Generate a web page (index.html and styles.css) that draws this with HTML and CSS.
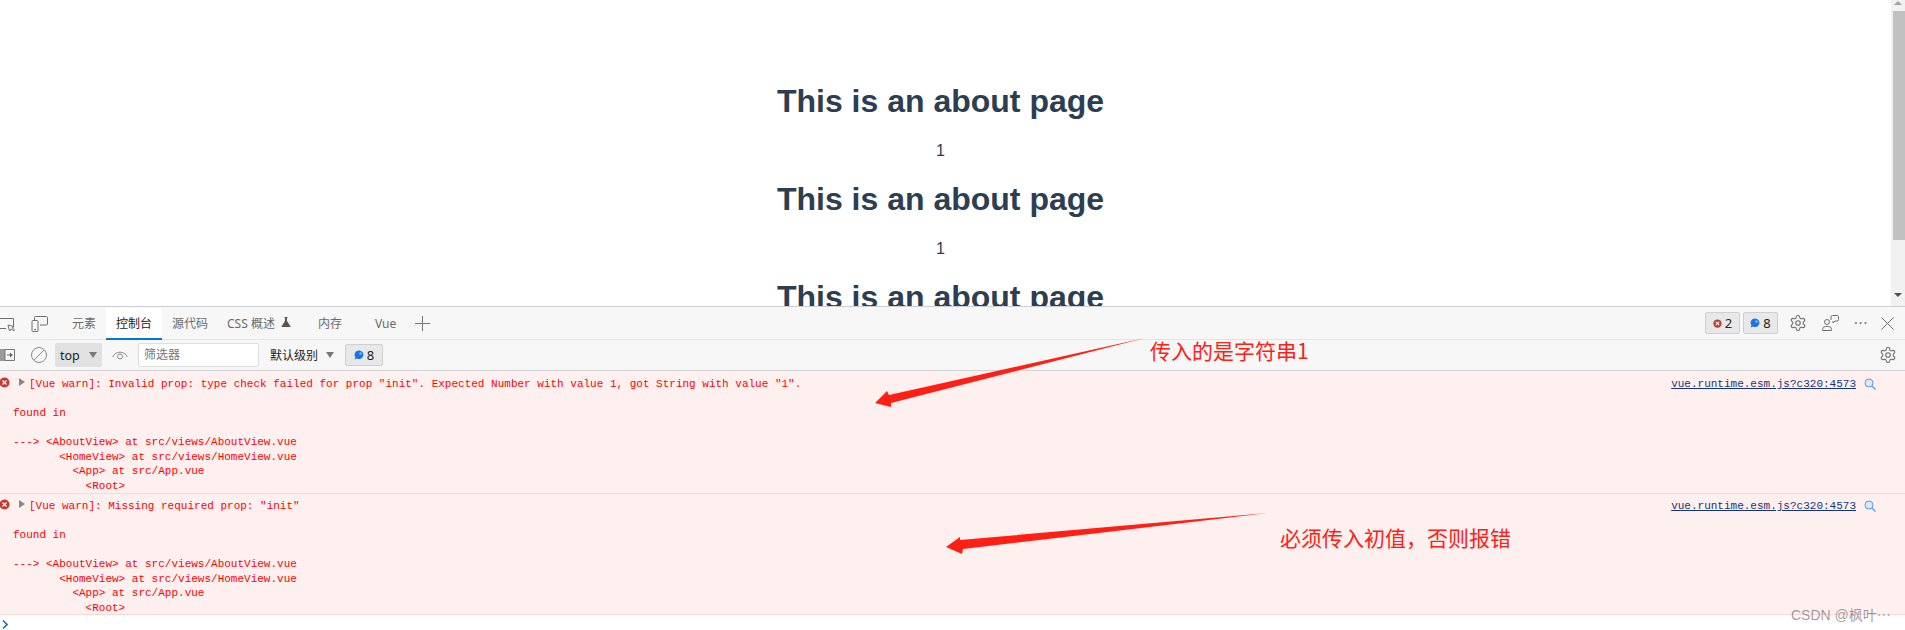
FILE: index.html
```html
<!DOCTYPE html>
<html lang="zh">
<head>
<meta charset="utf-8">
<title>About</title>
<link rel="stylesheet" href="styles.css">
</head>
<body>
<svg width="0" height="0" class="defs">
  <symbol id="gear" viewBox="0 0 24 24">
    <path fill="none" stroke="#6e6e6e" stroke-width="1.5" d="M12.22 2h-.44a2 2 0 0 0-2 2v.18a2 2 0 0 1-1 1.73l-.43.25a2 2 0 0 1-2 0l-.15-.08a2 2 0 0 0-2.73.73l-.22.38a2 2 0 0 0 .73 2.73l.15.1a2 2 0 0 1 1 1.72v.51a2 2 0 0 1-1 1.74l-.15.09a2 2 0 0 0-.73 2.73l.22.38a2 2 0 0 0 2.73.73l.15-.08a2 2 0 0 1 2 0l.43.25a2 2 0 0 1 1 1.73V20a2 2 0 0 0 2 2h.44a2 2 0 0 0 2-2v-.18a2 2 0 0 1 1-1.73l.43-.25a2 2 0 0 1 2 0l.15.08a2 2 0 0 0 2.73-.73l.22-.39a2 2 0 0 0-.73-2.73l-.15-.08a2 2 0 0 1-1-1.74v-.5a2 2 0 0 1 1-1.74l.15-.09a2 2 0 0 0 .73-2.73l-.22-.38a2 2 0 0 0-2.73-.73l-.15.08a2 2 0 0 1-2 0l-.43-.25a2 2 0 0 1-1-1.73V4a2 2 0 0 0-2-2z"/>
    <circle cx="12" cy="12" r="3" fill="none" stroke="#6e6e6e" stroke-width="1.5"/>
  </symbol>
  <symbol id="bubble" viewBox="0 0 12 12">
    <path fill="#1a73e8" d="M6 .5a5.2 5.2 0 1 1-2.4 9.8L.8 11.4l.9-2.7A5.2 5.2 0 0 1 6 .5z"/>
    <circle cx="7.8" cy="4.2" r="1.5" fill="#8ab8f5"/>
  </symbol>
  <symbol id="err" viewBox="0 0 12 12">
    <circle cx="6" cy="6" r="5.5" fill="#c5392c"/>
    <path stroke="#fff" stroke-width="1.4" d="M3.8 3.8l4.4 4.4M8.2 3.8l-4.4 4.4"/>
  </symbol>
</svg>

<div class="page">
  <main class="viewport">
    <section class="about"><h1 class="title">This is an about page</h1><div class="count">1</div></section>
    <section class="about"><h1 class="title">This is an about page</h1><div class="count">1</div></section>
    <section class="about"><h1 class="title">This is an about page</h1></section>
  </main>
  <div class="scrollbar">
    <span class="sb-up"></span>
    <span class="sb-thumb"></span>
    <span class="sb-down"></span>
  </div>
</div>

<div class="devtools">
  <div class="tabbar">
    <svg class="ic-inspect" width="16" height="16" viewBox="0 0 16 16"><path fill="none" stroke="#6e6e6e" d="M-2 2.5h15.5v8.5M6 12.5h-8"/><path fill="none" stroke="#6e6e6e" d="M8 9l1.5 6 1.5-2 2.6 1.8.9-1-2.4-2 2-1.2z"/></svg>
    <svg class="ic-device" width="17" height="16" viewBox="0 0 17 16"><rect x="1" y="4.500" width="6" height="11" rx="1" fill="none" stroke="#6e6e6e"/><path fill="none" stroke="#6e6e6e" d="M3.500 4V1.500a1 1 0 0 1 1-1h11a1 1 0 0 1 1 1V8a1 1 0 0 1-1 1H9"/><path stroke="#6e6e6e" d="M3 13.500h2"/></svg>
    <span class="tab tab-elements">元素</span>
    <span class="tab tab-active">控制台</span>
    <span class="tab">源代码</span>
    <span class="tab tab-css">CSS 概述
      <svg class="ic-flask" width="10" height="10" viewBox="0 0 10 10"><path fill="#555" d="M3.500 0h3v1h-.5v3l3.500 5.500V10H.5v-.5L4 4V1h-.5z"/></svg>
    </span>
    <span class="tab tab-memory">内存</span>
    <span class="tab tab-vue">Vue</span>
    <svg class="ic-plus" width="15" height="15" viewBox="0 0 15 15"><path stroke="#777" d="M7.500 0v15M0 7.500h15"/></svg>
    <span class="spacer"></span>
    <span class="count-badge"><svg width="9" height="9"><use href="#err"/></svg>2</span>
    <span class="count-badge"><svg width="10" height="10"><use href="#bubble"/></svg>8</span>
    <svg class="ic-gear-top" width="18" height="18"><use href="#gear"/></svg>
    <svg class="ic-feedback" width="17" height="16" viewBox="0 0 17 16"><circle cx="5" cy="7" r="2.500" fill="none" stroke="#6e6e6e"/><path fill="none" stroke="#6e6e6e" d="M.5 15.500v-1a3 3 0 0 1 3-3h3a3 3 0 0 1 3 3v1zM9 5V2a1.500 1.500 0 0 1 1.500-1.500h5A1.500 1.500 0 0 1 16.500 2v2.500A1.500 1.500 0 0 1 15 6h-2l-2 2V6"/></svg>
    <span class="more">···</span>
    <svg class="ic-close" width="13" height="13" viewBox="0 0 13 13"><path stroke="#6e6e6e" d="M.5.5l12 12M12.500.5l-12 12"/></svg>
  </div>

  <div class="toolbar">
    <svg class="ic-dock" width="15" height="12" viewBox="0 0 15 12"><path fill="#9a9a9a" d="M0 0h5v12H0z"/><path fill="none" stroke="#777" d="M5 .5h9.500v11H5z"/><path fill="#666" d="M7 5.500h3V3.500l3 2.500-3 2.500v-2H7z"/></svg>
    <svg class="ic-block" width="16" height="16" viewBox="0 0 16 16"><circle cx="8" cy="8" r="7.500" fill="none" stroke="#8a8a8a"/><path stroke="#8a8a8a" d="M3 13L13 3"/></svg>
    <span class="context">top<i class="caret"></i></span>
    <svg class="ic-eye" width="16" height="10" viewBox="0 0 16 10"><path fill="none" stroke="#8a8a8a" d="M.5 7C4 .5 12 .5 15.500 7"/><circle cx="8" cy="6.500" r="2.500" fill="none" stroke="#8a8a8a"/></svg>
    <span class="filter">筛选器</span>
    <span class="level">默认级别<i class="caret"></i></span>
    <span class="issues"><svg width="10" height="10"><use href="#bubble"/></svg>8</span>
    <span class="spacer"></span>
    <svg class="ic-gear-bar" width="18" height="18"><use href="#gear"/></svg>
  </div>

  <div class="console">
    <div class="msg msg-first">
      <svg class="msg-icon" width="11" height="11"><use href="#err"/></svg>
      <i class="disclosure"></i>
      <span class="msg-link">vue.runtime.esm.js?c320:4573<svg class="ic-search" width="12" height="12" viewBox="0 0 12 12"><circle cx="5" cy="5" r="4" fill="#dbe9fb" stroke="#5b9be8"/><path stroke="#5b9be8" stroke-width="1.300" d="M8 8l3.500 3.500"/></svg></span>
      <pre class="msg-text"><span class="lead">[Vue warn]: Invalid prop: type check failed for prop "init". Expected Number with value 1, got String with value "1".</span>

found in

---&gt; &lt;AboutView&gt; at src/views/AboutView.vue
       &lt;HomeView&gt; at src/views/HomeView.vue
         &lt;App&gt; at src/App.vue
           &lt;Root&gt;</pre>
    </div>
    <div class="msg msg-second">
      <svg class="msg-icon" width="11" height="11"><use href="#err"/></svg>
      <i class="disclosure"></i>
      <span class="msg-link">vue.runtime.esm.js?c320:4573<svg class="ic-search" width="12" height="12" viewBox="0 0 12 12"><circle cx="5" cy="5" r="4" fill="#dbe9fb" stroke="#5b9be8"/><path stroke="#5b9be8" stroke-width="1.300" d="M8 8l3.500 3.500"/></svg></span>
      <pre class="msg-text"><span class="lead">[Vue warn]: Missing required prop: "init"</span>

found in

---&gt; &lt;AboutView&gt; at src/views/AboutView.vue
       &lt;HomeView&gt; at src/views/HomeView.vue
         &lt;App&gt; at src/App.vue
           &lt;Root&gt;</pre>
    </div>
    <div class="prompt"><svg width="6" height="9" viewBox="0 0 6 9"><path fill="none" stroke="#1a73c8" stroke-width="1.600" d="M1 .5l4 4-4 4"/></svg></div>
  </div>
</div>

<svg class="arrows" width="1905" height="630" viewBox="0 0 1905 630">
  <polygon fill="#ff2015" points="1145,338 889,395 887,391 875,403 891,407 891,403"/>
  <polygon fill="#ff2015" points="1268,513 960,540 960,537 946,547 962,554 963,549"/>
</svg>
<span class="note note-one">传入的是字符串1</span>
<span class="note note-two">必须传入初值，否则报错</span>
<span class="watermark">CSDN @枫叶⋯</span>
</body>
</html>
```

FILE: styles.css
```css
* { box-sizing: border-box; }
html, body { margin: 0; height: 630px; overflow: hidden; background: #fff; }
body { position: relative; font-family: "Noto Sans", "Noto Sans CJK SC", sans-serif; }
.defs { position: absolute; }

.page { display: flex; height: 306px; }
.viewport { flex: 1; overflow: hidden; padding: 62px 10px 0 0; text-align: center; color: #2c3e50; font-family: "Liberation Sans", Arial, sans-serif; }
.title { margin: 21.44px 0; font-size: 32px; line-height: 37px; font-weight: 700; }
.count { font-size: 16px; line-height: 18px; }

.scrollbar { width: 14px; background: #f1f1f1; display: flex; flex-direction: column; align-items: flex-end; }
.sb-up { width: 0; height: 0; margin: 1px 3px 5px 0; border: 4px solid transparent; border-top: 0; border-bottom: 4px solid #a3a3a3; border-left-width: 4px; }
.sb-thumb { width: 12px; height: 229px; margin-top: 1px; background: #c1c1c1; }
.sb-down { width: 0; height: 0; margin: 53px 3px 0 0; border: 4px solid transparent; border-bottom: 0; border-top: 4px solid #505050; }

.devtools { height: 324px; border-top: 1px solid #cdcdd5; background: #fff; color: #333; }
.tabbar { display: flex; align-items: center; height: 33px; background: #f7f7f7; border-bottom: 1px solid #e3e3e3; font-size: 12px; padding-right: 11px; color: #6a6a6a; }
.spacer { flex: 1; }
.ic-inspect { margin-top: 2px; flex: none; }
.ic-device { margin: 2px 0 0 15px; flex: none; }
.tab { display: flex; align-items: center; justify-content: center; height: 32px; padding: 0 10px; white-space: nowrap; }
.tab-elements { margin-left: 14px; }
.tab-active { width: 56px; background: #fff; color: #222; border-bottom: 2px solid #0078d4; margin-top: 1px; }
.tab-css { gap: 6px; margin-left: -1px; }
.ic-flask { margin-bottom: 3px; }
.tab-memory { margin-left: 7px; }
.tab-vue { margin-left: 13px; }
.ic-plus { margin-left: 9px; flex: none; }
.count-badge, .issues { display: flex; align-items: center; justify-content: center; gap: 3px; height: 22px; background: #e8e8e8; border: 1px solid #cfcfcf; border-radius: 2px; font-size: 13px; color: #222; }
.count-badge { width: 35px; margin-right: 3px; }
.ic-gear-top { margin-left: 8px; flex: none; }
.ic-feedback { margin-left: 15px; flex: none; }
.more { width: 14px; margin-left: 15px; color: #6e6e6e; font-size: 14px; letter-spacing: 1px; line-height: 12px; }
.ic-close { margin-left: 13px; flex: none; }

.toolbar { display: flex; align-items: center; height: 31px; background: #f7f7f7; border-bottom: 1px solid #cfd3d6; font-size: 12px; color: #333; padding-right: 8px; }
.ic-dock { flex: none; }
.ic-block { margin-left: 16px; flex: none; }
.context { display: flex; align-items: center; justify-content: space-between; width: 47px; height: 24px; margin-left: 8px; padding: 0 5px 0 5px; background: #e1e1e1; font-size: 12.500px; border-radius: 2px; color: #222; }
.caret { display: inline-block; width: 0; height: 0; border: 4.500px solid transparent; border-bottom: 0; border-top: 6px solid #777; }
.ic-eye { margin-left: 10px; flex: none; }
.filter { width: 121px; height: 24px; margin-left: 10px; padding-left: 5px; line-height: 22px; background: #fff; border: 1px solid #dedede; border-radius: 2px; color: #757575; }
.level { display: flex; align-items: center; gap: 8px; margin-left: 11px; color: #222; }
.issues { width: 38px; margin-left: 11px; }
.ic-gear-bar { flex: none; }

.console { background: #fff; }
.msg { position: relative; height: 123px; padding: 6px 0 0 13px; background: #fff0f0; border-bottom: 1px solid #ffd6d6; }
.msg-second { height: 121px; padding-top: 5px; }
.msg-text { margin: 0; font: 11px/14.500px "Liberation Mono", "DejaVu Sans Mono", monospace; color: #f00; }
.lead { margin-left: 16px; }
.msg-icon { position: absolute; left: -1px; top: 6px; }
.msg-second .msg-icon { top: 5px; }
.disclosure { position: absolute; left: 19px; top: 7px; width: 0; height: 0; border: 4.500px solid transparent; border-right: 0; border-left: 6px solid #888; }
.msg-second .disclosure { top: 6px; }
.msg-link { position: absolute; right: 49px; top: 6px; font: 11px/14.500px "Liberation Mono", monospace; color: #15327f; text-decoration: underline; }
.msg-second .msg-link { top: 5px; }
.ic-search { position: absolute; left: calc(100% + 8px); top: 1px; }
.prompt { height: 15px; padding: 5px 0 0 2px; line-height: 0; }

.arrows { position: absolute; left: 0; top: 0; pointer-events: none; }
.note { position: absolute; font-family: "Noto Sans CJK SC", sans-serif; font-size: 21px; line-height: 26px; color: #ff2015; white-space: nowrap; font-weight: 400; }
.note-one { left: 1150px; top: 337px; }
.note-two { left: 1280px; top: 524px; }
.watermark { position: absolute; left: 1791px; top: 606px; font-family: "Liberation Sans", "Noto Sans CJK SC", sans-serif; font-size: 14px; line-height: 18px; color: rgba(90, 90, 90, 0.6); white-space: nowrap; }
```
